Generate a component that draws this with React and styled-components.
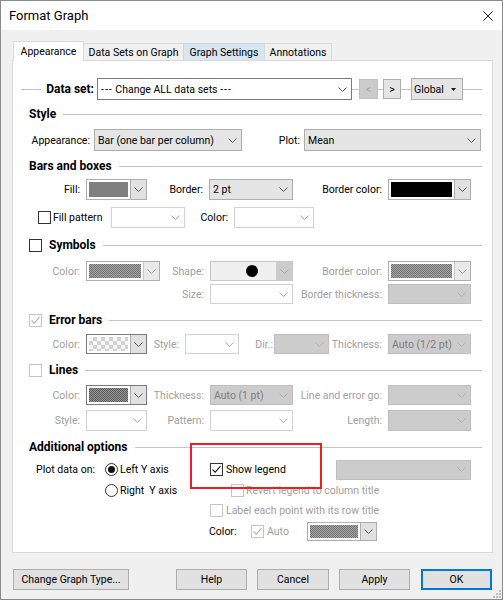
import React from "react";
import styled, { createGlobalStyle, css } from "styled-components";

const Global = createGlobalStyle`
  html, body { margin: 0; padding: 0; background: #fff; }
  body {
    font-family: Roboto, "Liberation Sans", Arial, sans-serif;
    font-size: 10.5px;
    color: #000;
  }
  * { box-sizing: border-box; }
`;

const Window = styled.div`
  position: relative;
  width: 503px;
  height: 600px;
  border: 1px solid #8a8a8a;
  background: #f0f0f0;
  display: flex;
  flex-direction: column;
`;

const TitleBar = styled.div`
  height: 29px;
  flex: none;
  background: #fff;
  display: flex;
  align-items: center;
  padding: 0 9px 0 8px;
  font-size: 13px;
`;

const TitleText = styled.span`
  flex: 1;
`;

const Body = styled.div`
  padding: 0 9px 0 11px;
  display: flex;
  flex-direction: column;
`;

const TabStrip = styled.div`
  display: flex;
  align-items: flex-end;
  height: 19px;
  margin-top: 11px;
  padding-left: 1px;
`;

const Tab = styled.div`
  flex: none;
  width: ${(p) => p.$w}px;
  height: ${(p) => (p.$active ? 20 : 17)}px;
  margin-bottom: ${(p) => (p.$active ? -1 : 0)}px;
  margin-left: ${(p) => (p.$first ? 0 : -1)}px;
  position: relative;
  z-index: ${(p) => (p.$active ? 2 : 1)};
  display: flex;
  align-items: center;
  justify-content: center;
  white-space: nowrap;
  border: 1px solid #d9d9d9;
  border-bottom: none;
  background: ${(p) => (p.$active ? "#fff" : p.$hover ? "#d8e6f2" : "#f0f0f0")};
  ${(p) => p.$hover && css`border-color: #c5d7e8;`}
`;

const Panel = styled.div`
  width: 481px;
  height: 493px;
  background: #fff;
  border: 1px solid #d9d9d9;
  padding: 17px 10px 0 8px;
  display: flex;
  flex-direction: column;
`;

const Row = styled.div`
  display: flex;
  align-items: center;
  height: ${(p) => p.$h || 20}px;
  margin-top: ${(p) => p.$mt || 0}px;
  padding-left: ${(p) => p.$pl || 0}px;
  flex: none;
`;

const Rule = styled.span`
  height: 1px;
  background: #c4c4c4;
  ${(p) => (p.$w ? css`width: ${p.$w}px; flex: none;` : css`flex: 1;`)}
`;

const Header = styled.div`
  display: flex;
  align-items: center;
  height: 16px;
  margin-top: ${(p) => p.$mt || 0}px;
  padding-left: 8px;
  flex: none;
`;

const HeadTitle = styled.span`
  font-weight: 700;
  font-size: 12px;
  margin-right: 7px;
  margin-left: ${(p) => (p.$afterBox ? 7 : 0)}px;
  white-space: nowrap;
`;

const Label = styled.span`
  flex: none;
  width: ${(p) => p.$w}px;
  padding-right: ${(p) => (p.$gap ?? 6)}px;
  text-align: ${(p) => (p.$left ? "left" : "right")};
  white-space: pre;
  color: ${(p) => (p.$dim ? "#a0a0a0" : "#000")};
  font-weight: ${(p) => (p.$bold ? 700 : 400)};
  font-size: ${(p) => (p.$bold ? 12 : 10.5)}px;
`;

const Dashes = styled.span`
  letter-spacing: 1px;
`;

const comboLook = {
  field: css`background: #fff; border-color: #7a7a7a; color: #000;`,
  button: css`background: #e5e5e5; border-color: #adadad; color: #000;`,
  blank: css`background: #fff; border-color: #d2d2d2; color: #a0a0a0;`,
  off: css`background: #cccccc; border-color: #bfbfbf; color: #7d7d7d;`,
  shape: css`background: #f0f0f0; border-color: #c8c8c8; color: #000;`,
};

const ComboBox = styled.div`
  flex: none;
  display: flex;
  align-items: stretch;
  width: ${(p) => p.$w}px;
  height: ${(p) => p.$h || 20}px;
  border: 1px solid;
  ${(p) => comboLook[p.$v || "field"]}
`;

const ComboText = styled.span`
  flex: 1;
  display: flex;
  align-items: center;
  justify-content: ${(p) => (p.$center ? "center" : "flex-start")};
  padding-left: 3px;
  white-space: pre;
  overflow: hidden;
`;

const ComboArrow = styled.span`
  flex: none;
  width: ${(p) => p.$w || 17}px;
  display: flex;
  align-items: center;
  justify-content: center;
  background: ${(p) => p.$bg || "transparent"};
`;

const ShapeDot = styled.span`
  width: 12px;
  height: 12px;
  border-radius: 50%;
  background: #000;
  margin-left: 14px;
`;

const swatchFills = {
  solid: css`background: #808080;`,
  black: css`background: #000;`,
  dither: css`
    background-color: #8c8c8c;
    background-image: repeating-conic-gradient(#6f6f6f 0 25%, #a9a9a9 0 50%);
    background-size: 2px 2px;
  `,
  darkDither: css`
    background-color: #777;
    background-image: repeating-conic-gradient(#5a5a5a 0 25%, #979797 0 50%);
    background-size: 2px 2px;
  `,
  checker: css`
    background-color: #eee;
    background-image: repeating-conic-gradient(#d2d2d2 0 25%, #f6f6f6 0 50%);
    background-size: 8px 8px;
  `,
};

const SwatchBox = styled.div`
  flex: none;
  display: flex;
  width: ${(p) => p.$w}px;
  height: ${(p) => p.$h || 20}px;
  border: 1px solid ${(p) => (p.$dark ? "#7a7a7a" : "#adadad")};
  background: #fff;
`;

const SwatchFill = styled.span`
  flex: 1;
  margin: 2px;
  ${(p) => swatchFills[p.$fill]}
`;

const SwatchDrop = styled.span`
  flex: none;
  width: 16px;
  display: flex;
  align-items: center;
  justify-content: center;
  background: ${(p) => (p.$off ? "#e9e9e9" : "#e1e1e1")};
  border-left: 1px solid ${(p) => (p.$off ? "#c8c8c8" : "#adadad")};
`;

const NavBtn = styled.span`
  flex: none;
  width: ${(p) => p.$w}px;
  height: 20px;
  display: flex;
  align-items: center;
  justify-content: center;
  border: 1px solid ${(p) => (p.$off ? "#bfbfbf" : "#adadad")};
  background: ${(p) => (p.$off ? "#cccccc" : "#e5e5e5")};
  color: ${(p) => (p.$off ? "#a6a6a6" : "#000")};
`;

const GlobalBtn = styled.span`
  flex: none;
  width: 52px;
  height: 22px;
  display: flex;
  align-items: center;
  justify-content: space-between;
  padding: 0 6px 0 2px;
  border: 1px solid #adadad;
  background: #e5e5e5;
`;

const Box = styled.span`
  flex: none;
  width: 13px;
  height: 13px;
  border: 1px solid ${(p) => (p.$off ? "#c6c6c6" : "#333")};
  background: #fff;
  display: flex;
  align-items: center;
  justify-content: center;
`;

const CheckItem = styled.span`
  flex: none;
  display: flex;
  align-items: center;
  gap: ${(p) => p.$gap ?? 2}px;
  width: ${(p) => (p.$w ? `${p.$w}px` : "auto")};
  margin-left: ${(p) => p.$ml || 0}px;
  color: ${(p) => (p.$dim ? "#a0a0a0" : "#000")};
  white-space: pre;
`;

const RadioRing = styled.span`
  flex: none;
  width: 13px;
  height: 13px;
  border-radius: 50%;
  border: 1px solid #333;
  background: #fff;
  display: flex;
  align-items: center;
  justify-content: center;
`;

const RadioDot = styled.span`
  width: 7px;
  height: 7px;
  border-radius: 50%;
  background: #111;
`;

const OptionsGrid = styled.div`
  position: relative;
  display: grid;
  grid-template-columns: 84px 104px 1fr;
  grid-template-rows: 21px 21px 19px 23px;
  align-items: center;
  margin-top: 4px;
`;

const Cell = styled.div`
  grid-column: ${(p) => p.$col};
  grid-row: ${(p) => p.$row};
  display: flex;
  align-items: center;
  padding-left: ${(p) => p.$pl || 0}px;
`;

const Highlight = styled.div`
  position: absolute;
  left: 169px;
  top: -16px;
  width: 132px;
  height: 46px;
  border: 2px solid #ee1c24;
  pointer-events: none;
`;

const ButtonBar = styled.div`
  display: flex;
  width: 481px;
  margin-top: 16px;
  padding: 0 1px;
`;

const DlgButton = styled.button`
  flex: none;
  width: ${(p) => p.$w || 71}px;
  height: 21px;
  margin-left: ${(p) => p.$ml || 0}px;
  padding: 0;
  font: inherit;
  color: #000;
  background: #e1e1e1;
  border: ${(p) => (p.$default ? "2px solid #0078d7" : "1px solid #adadad")};
`;

const Grip = styled.svg`
  position: absolute;
  right: 1px;
  bottom: 1px;
`;

const Chevron = ({ color = "#5a5a5a" }) => (
  <svg width="9" height="5" viewBox="0 0 9 5">
    <path d="M0.5 0.5 L4.5 4.5 L8.5 0.5" fill="none" stroke={color} strokeWidth="1" />
  </svg>
);

const Combo = ({ w, h, v = "field", text, center, children }) => {
  const arrow = v === "blank" || v === "off" ? "#b0b0b0" : "#5a5a5a";
  return (
    <ComboBox $w={w} $h={h} $v={v}>
      <ComboText $center={center}>{children || text}</ComboText>
      {v === "shape" ? (
        <ComboArrow $w={16} $bg="#cccccc">
          <Chevron color="#a8a8a8" />
        </ComboArrow>
      ) : (
        <ComboArrow>
          <Chevron color={arrow} />
        </ComboArrow>
      )}
    </ComboBox>
  );
};

const Swatch = ({ w, h, fill, off, dark }) => (
  <SwatchBox $w={w} $h={h} $dark={dark}>
    <SwatchFill $fill={fill} />
    <SwatchDrop $off={off}>
      <Chevron color={off ? "#a8a8a8" : "#5a5a5a"} />
    </SwatchDrop>
  </SwatchBox>
);

const Check = ({ off, checked }) => (
  <Box $off={off}>
    {checked && (
      <svg width="11" height="11" viewBox="0 0 11 11">
        <path
          d="M1.5 5.5 L4.2 8.2 L9.5 2.2"
          fill="none"
          stroke={off ? "#b4b4b4" : "#222"}
          strokeWidth="1.2"
        />
      </svg>
    )}
  </Box>
);

const Radio = ({ checked }) => <RadioRing>{checked && <RadioDot />}</RadioRing>;

export default function App() {
  return (
    <>
      <Global />
      <Window>
        <TitleBar>
          <TitleText>Format Graph</TitleText>
          <svg width="10" height="10" viewBox="0 0 10 10">
            <path d="M0.5 0.5 L9.5 9.5 M9.5 0.5 L0.5 9.5" stroke="#111" strokeWidth="1" />
          </svg>
        </TitleBar>

        <Body>
          <TabStrip>
            <Tab $w={71} $active $first>Appearance</Tab>
            <Tab $w={101}>Data Sets on Graph</Tab>
            <Tab $w={82} $hover>Graph Settings</Tab>
            <Tab $w={68}>Annotations</Tab>
          </TabStrip>

          <Panel>
            <Row $h={22}>
              <Rule $w={20} />
              <Label $w={56} $gap={3} $bold>Data set:</Label>
              <Combo w={255} h={22} v="field">
                <Dashes>---</Dashes> Change ALL data sets <Dashes>---</Dashes>
              </Combo>
              <Rule $w={7} />
              <NavBtn $w={19} $off>&lt;</NavBtn>
              <Rule $w={5} />
              <NavBtn $w={18}>&gt;</NavBtn>
              <Rule $w={10} />
              <GlobalBtn>
                Global
                <svg width="5" height="3" viewBox="0 0 5 3">
                  <path d="M0 0 H5 L2.5 3 Z" fill="#111" />
                </svg>
              </GlobalBtn>
              <Rule />
            </Row>

            <Header $mt={6}>
              <HeadTitle>Style</HeadTitle>
              <Rule />
            </Header>
            <Row $h={22} $mt={7}>
              <Label $w={73} $gap={4}>Appearance:</Label>
              <Combo w={148} h={22} v="button" text="Bar (one bar per column)" />
              <Label $w={62} $gap={4}>Plot:</Label>
              <Combo w={177} h={22} v="button" text="Mean" />
            </Row>

            <Header $mt={7}>
              <HeadTitle>Bars and boxes</HeadTitle>
              <Rule />
            </Header>
            <Row $h={21} $mt={5}>
              <Label $w={65}>Fill:</Label>
              <Swatch w={61} h={21} fill="solid" />
              <Label $w={62}>Border:</Label>
              <Combo w={84} h={21} v="button" text="2 pt" />
              <Label $w={95}>Border color:</Label>
              <Swatch w={83} h={21} fill="black" />
            </Row>
            <Row $h={21} $mt={7}>
              <CheckItem $w={73} $ml={17}>
                <Check />
                Fill pattern
              </CheckItem>
              <Combo w={74} h={21} v="blank" />
              <Label $w={49}>Color:</Label>
              <Combo w={80} h={21} v="blank" />
            </Row>

            <Header $mt={9}>
              <Check />
              <HeadTitle $afterBox>Symbols</HeadTitle>
              <Rule />
            </Header>
            <Row $mt={8}>
              <Label $w={65} $dim>Color:</Label>
              <Swatch w={74} fill="dither" off />
              <Label $w={50} $dim>Shape:</Label>
              <Combo w={83} v="shape" center>
                <ShapeDot />
              </Combo>
              <Label $w={95} $dim>Border color:</Label>
              <Swatch w={83} fill="dither" off />
            </Row>
            <Row $mt={3}>
              <Label $w={189} $dim>Size:</Label>
              <Combo w={83} v="blank" />
              <Label $w={95} $dim>Border thickness:</Label>
              <Combo w={83} v="off" />
            </Row>

            <Header $mt={8}>
              <Check off checked />
              <HeadTitle $afterBox>Error bars</HeadTitle>
              <Rule />
            </Header>
            <Row $mt={6}>
              <Label $w={65} $dim>Color:</Label>
              <Swatch w={61} fill="checker" dark />
              <Label $w={38} $dim>Style:</Label>
              <Combo w={54} v="blank" />
              <Label $w={35} $gap={1} $dim>Dir.:</Label>
              <Combo w={55} v="off" />
              <Label $w={59} $dim>Thickness:</Label>
              <Combo w={83} v="off" text="Auto (1/2 pt)" />
            </Row>

            <Header $mt={8}>
              <Check off />
              <HeadTitle $afterBox>Lines</HeadTitle>
              <Rule />
            </Header>
            <Row $mt={7}>
              <Label $w={65} $dim>Color:</Label>
              <Swatch w={61} fill="darkDither" dark />
              <Label $w={63} $dim>Thickness:</Label>
              <Combo w={83} v="off" text="Auto (1 pt)" />
              <Label $w={95} $dim>Line and error go:</Label>
              <Combo w={83} v="off" />
            </Row>
            <Row $h={21} $mt={5}>
              <Label $w={65} $dim>Style:</Label>
              <Combo w={61} h={21} v="blank" />
              <Label $w={63} $dim>Pattern:</Label>
              <Combo w={83} h={21} v="blank" />
              <Label $w={95} $dim>Length:</Label>
              <Combo w={83} h={21} v="off" />
            </Row>

            <Header $mt={8}>
              <HeadTitle>Additional options</HeadTitle>
              <Rule />
            </Header>
            <OptionsGrid>
              <Cell $col={1} $row={1}>
                <Label $w={84} $gap={10}>Plot data on:</Label>
              </Cell>
              <Cell $col={2} $row={1}>
                <CheckItem>
                  <Radio checked />
                  Left Y axis
                </CheckItem>
              </Cell>
              <Cell $col={3} $row={1} $pl={1}>
                <CheckItem $w={126} $gap={3}>
                  <Check checked />
                  Show legend
                </CheckItem>
                <Combo w={135} v="off" />
              </Cell>
              <Cell $col={2} $row={2}>
                <CheckItem>
                  <Radio />
                  {"Right  Y axis"}
                </CheckItem>
              </Cell>
              <Cell $col={3} $row={2} $pl={22}>
                <CheckItem $dim>
                  <Check off />
                  Revert legend to column title
                </CheckItem>
              </Cell>
              <Cell $col={3} $row={3} $pl={1}>
                <CheckItem $dim $gap={3}>
                  <Check off />
                  Label each point with its row title
                </CheckItem>
              </Cell>
              <Cell $col={3} $row={4}>
                <Label $w={42} $left>Color:</Label>
                <CheckItem $w={56} $dim $gap={3}>
                  <Check off checked />
                  Auto
                </CheckItem>
                <Swatch w={70} h={19} fill="dither" />
              </Cell>
              <Highlight />
            </OptionsGrid>
          </Panel>

          <ButtonBar>
            <DlgButton $w={116}>Change Graph Type...</DlgButton>
            <DlgButton $ml={47}>Help</DlgButton>
            <DlgButton $ml={10} $w={72}>Cancel</DlgButton>
            <DlgButton $ml={10}>Apply</DlgButton>
            <DlgButton $ml={11} $default>OK</DlgButton>
          </ButtonBar>
        </Body>

        <Grip width="9" height="9" viewBox="0 0 9 9">
          {[
            [7, 1],
            [7, 4],
            [4, 4],
            [7, 7],
            [4, 7],
            [1, 7],
          ].map(([x, y]) => (
            <rect key={`${x}-${y}`} x={x} y={y} width="2" height="2" fill="#bdbdbd" />
          ))}
        </Grip>
      </Window>
    </>
  );
}
